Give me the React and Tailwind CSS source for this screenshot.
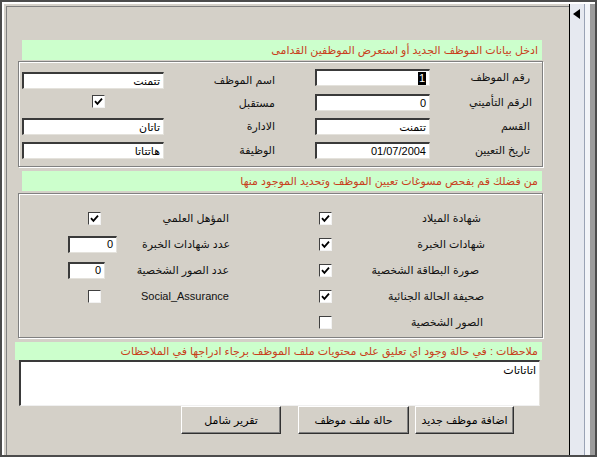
import React from 'react';

const Field = ({ className = '', children }) => (
  <div
    className={`h-[17px] bg-white border-t-2 border-l-2 border-t-[#3a3a3a] border-l-[#3a3a3a] border-b border-r border-b-[#e4e2dc] border-r-[#e4e2dc] flex items-center justify-end pr-[3px] text-[11px] text-black leading-none ${className}`}
  >
    {children}
  </div>
);

const Check = ({ checked }) => (
  <div className="w-[13px] h-[13px] bg-white border border-t-[#404040] border-l-[#404040] border-r-[#f2f2f2] border-b-[#f2f2f2] flex items-center justify-center">
    {checked && (
      <svg width="9" height="9" viewBox="0 0 9 9">
        <path d="M1 4.2 L3.4 6.8 L8 1.6" fill="none" stroke="#000" strokeWidth="1.8" />
      </svg>
    )}
  </div>
);

const Label = ({ className = '', children }) => (
  <div dir="rtl" className={`text-right text-[11px] text-[#111] whitespace-nowrap ${className}`}>
    {children}
  </div>
);

const Banner = ({ className = '', children }) => (
  <div
    dir="rtl"
    className={`bg-[#ccffcc] text-[#c8401c] text-[11px] flex items-center pr-[4px] whitespace-nowrap ${className}`}
  >
    {children}
  </div>
);

const Btn = ({ className = '', children }) => (
  <button
    className={`h-[28px] bg-[#d4d0c8] border border-t-white border-l-white border-r-[#303030] border-b-[#303030] shadow-[inset_-1px_-1px_0_#808080] text-[11px] text-black ${className}`}
  >
    {children}
  </button>
);

const boxCls =
  'border border-[#808080] shadow-[inset_1px_1px_0_#ffffff,1px_1px_0_#ffffff]';

export default function App() {
  return (
    <div className="w-[597px] h-[457px] border-2 border-[#4c4c4c] bg-[#d4d0c8] flex [font-family:'Liberation_Sans','DejaVu_Sans',sans-serif]">
      {/* main form area */}
      <div className="w-[567px] h-full pl-[2px] pt-[2px] border-l-2 border-t-2 border-white">
        <div className="h-full border-l border-t border-[#808080] flex flex-col">
          <Banner className="mt-[33px] ml-[15px] w-[520px] h-[20px]">
            ادخل بيانات الموظف الجديد أو استعرض الموظفين القدامى
          </Banner>

          {/* employee info */}
          <div className={`mt-[1px] ml-[11px] w-[525px] h-[106px] pt-[7px] ${boxCls}`}>
            <div className="flex h-[25px]">
              <div className="flex items-center self-start pt-[3px] pl-[3px]">
                <Field className="w-[142px]">تتمنت</Field>
                <Label className="w-[111px]">اسم الموظف</Label>
              </div>
              <div className="flex items-start ml-[40px]">
                <Field className="w-[115px]">
                  <span className="bg-black text-white px-[1px] leading-[13px]">1</span>
                </Field>
                <Label className="w-[100px] leading-[17px]">رقم الموظف</Label>
              </div>
            </div>
            <div className="flex h-[24px]">
              <div className="flex items-start pl-[3px]">
                <div className="w-[142px] flex pl-[70px] pt-[1px]">
                  <Check checked />
                </div>
                <Label className="w-[111px] leading-[17px] pt-[1px]">مستقبل</Label>
              </div>
              <div className="flex items-start ml-[40px]">
                <Field className="w-[115px]">0</Field>
                <Label className="w-[102px] leading-[17px]">الرقم التأميني</Label>
              </div>
            </div>
            <div className="flex h-[24px]">
              <div className="flex items-start pl-[3px]">
                <Field className="w-[142px]">تاتان</Field>
                <Label className="w-[111px] leading-[17px]">الادارة</Label>
              </div>
              <div className="flex items-start ml-[40px]">
                <Field className="w-[115px]">تتمنت</Field>
                <Label className="w-[100px] leading-[17px]">القسم</Label>
              </div>
            </div>
            <div className="flex h-[24px]">
              <div className="flex items-start pl-[3px]">
                <Field className="w-[142px]">هاتتاتا</Field>
                <Label className="w-[111px] leading-[17px]">الوظيفة</Label>
              </div>
              <div className="flex items-start ml-[40px]">
                <Field className="w-[115px]">01/07/2004</Field>
                <Label className="w-[100px] leading-[17px]">تاريخ التعيين</Label>
              </div>
            </div>
          </div>

          <Banner className="mt-[4px] ml-[15px] w-[520px] h-[20px]">
            من فضلك قم بفحص مسوغات تعيين الموظف وتحديد الموجود منها
          </Banner>

          {/* documents checklist */}
          <div className={`mt-[2px] ml-[11px] w-[525px] h-[145px] pt-[11px] ${boxCls}`}>
            <div className="flex items-center h-[26px] pl-[49px]">
              <div className="w-[50px] flex pl-[20px]">
                <Check checked />
              </div>
              <Label className="w-[111px]">المؤهل العلمي</Label>
              <div className="w-[90px]" />
              <Check checked />
              <Label className="w-[149px]">شهادة الميلاد</Label>
            </div>
            <div className="flex items-center h-[26px] pl-[49px]">
              <div className="w-[50px] flex">
                <Field className="w-[49px]">0</Field>
              </div>
              <Label className="w-[112px]">عدد شهادات الخبرة</Label>
              <div className="w-[89px]" />
              <Check checked />
              <Label className="w-[153px]">شهادات الخبرة</Label>
            </div>
            <div className="flex items-center h-[26px] pl-[49px]">
              <div className="w-[50px] flex">
                <Field className="w-[37px]">0</Field>
              </div>
              <Label className="w-[111px]">عدد الصور الشخصية</Label>
              <div className="w-[90px]" />
              <Check checked />
              <Label className="w-[147px]">صورة البطاقة الشخصية</Label>
            </div>
            <div className="flex items-center h-[26px] pl-[49px]">
              <div className="w-[50px] flex pl-[20px]">
                <Check />
              </div>
              <Label className="w-[111px]">Social_Assurance</Label>
              <div className="w-[90px]" />
              <Check checked />
              <Label className="w-[152px]">صحيفة الحالة الجنائية</Label>
            </div>
            <div className="flex items-center h-[26px] pl-[49px]">
              <div className="w-[50px]" />
              <div className="w-[111px]" />
              <div className="w-[90px]" />
              <Check />
              <Label className="w-[151px]">الصور الشخصية</Label>
            </div>
          </div>

          <Banner className="mt-[4px] ml-[8px] w-[527px] h-[18px]">
            ملاحظات : في حالة وجود اي تعليق على محتويات ملف الموظف برجاء ادراجها في الملاحظات
          </Banner>

          {/* notes */}
          <div
            dir="rtl"
            className="ml-[12px] w-[521px] h-[46px] bg-white border-t-2 border-l-2 border-t-[#3a3a3a] border-l-[#3a3a3a] border-b border-r border-b-[#f0f0f0] border-r-[#e4e2dc] text-[11px] leading-[14px] text-black px-[3px] pt-[1px] text-right"
          >
            اتاتاتات
          </div>

          <div className="flex ml-[174px]">
            <Btn className="w-[100px]">تقرير شامل</Btn>
            <Btn className="w-[111px] ml-[17px]">حالة ملف موظف</Btn>
            <Btn className="w-[99px] ml-[6px]">اضافة موظف جديد</Btn>
          </div>
        </div>
      </div>

      {/* record selector strip */}
      <div className="w-[26px] h-full flex border-t-2 border-white">
        <div className="w-[15px] h-full border-l border-black bg-[#e6e9f0] pl-[3px] pt-[5px]">
          <svg width="7" height="10" viewBox="0 0 7 10">
            <polygon points="7,0 7,10 0,5" fill="#000" />
          </svg>
        </div>
        <div className="w-[1px] h-full bg-[#9aa3b5]" />
        <div className="w-[5px] h-full bg-[#f2f4f8]" />
        <div className="w-[5px] h-full bg-[#9c9c9c]" />
      </div>
    </div>
  );
}
